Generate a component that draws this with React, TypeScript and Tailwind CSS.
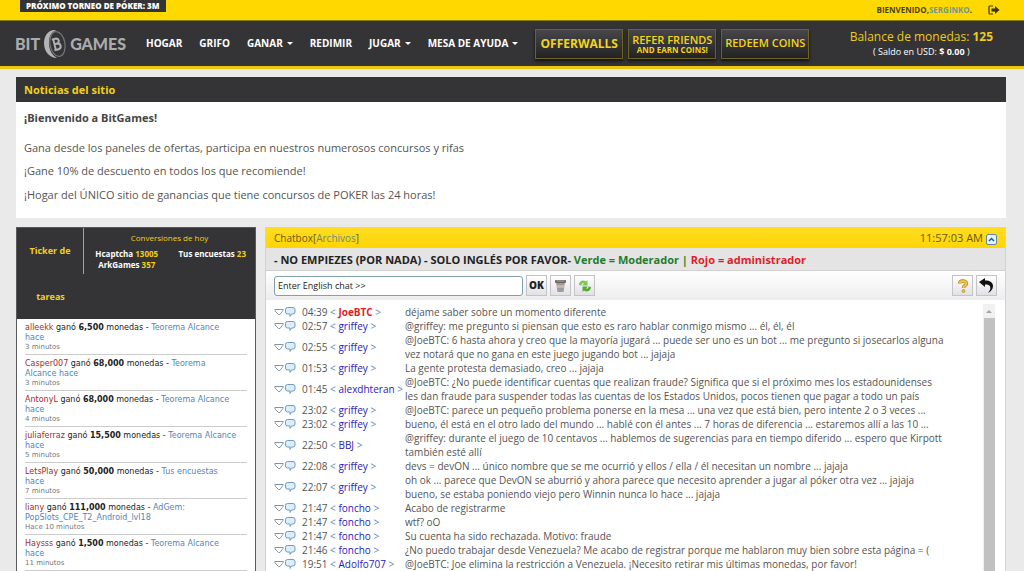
import React, { useState } from 'react';

const navItems = [
  { label: 'HOGAR', menu: false },
  { label: 'GRIFO', menu: false },
  { label: 'GANAR', menu: true },
  { label: 'REDIMIR', menu: false },
  { label: 'JUGAR', menu: true },
  { label: 'MESA DE AYUDA', menu: true },
];

const conversions = [
  { name: 'Hcaptcha', total: '13005' },
  { name: 'Tus encuestas', total: '23' },
  { name: 'ArkGames', total: '357' },
];

const tasks = [
  { user: 'alleekk', coins: '6,500', offer: ['Teorema Alcance', 'hace'], ago: '3 minutos' },
  { user: 'Casper007', coins: '68,000', offer: ['Teorema', 'Alcance hace'], ago: '3 minutos' },
  { user: 'AntonyL', coins: '68,000', offer: ['Teorema Alcance', 'hace'], ago: '4 minutos' },
  { user: 'juliaferraz', coins: '15,500', offer: ['Teorema Alcance', 'hace'], ago: '5 minutos' },
  { user: 'LetsPlay', coins: '50,000', offer: ['Tus encuestas', 'hace'], ago: '7 minutos' },
  { user: 'liany', coins: '111,000', offer: ['AdGem:', 'PopSlots_CPE_T2_Android_lvl18'], ago: 'Hace 10 minutos' },
  { user: 'Haysss', coins: '1,500', offer: ['Teorema Alcance', 'hace'], ago: '11 minutos' },
];

const messages = [
  { time: '04:39', user: 'JoeBTC', admin: true, text: 'déjame saber sobre un momento diferente' },
  { time: '02:57', user: 'griffey', text: '@griffey: me pregunto si piensan que esto es raro hablar conmigo mismo ... él, él, él' },
  { time: '02:55', user: 'griffey', text: '@JoeBTC: 6 hasta ahora y creo que la mayoría jugará ... puede ser uno es un bot ... me pregunto si josecarlos alguna\nvez notará que no gana en este juego jugando bot ... jajaja' },
  { time: '01:53', user: 'griffey', text: 'La gente protesta demasiado, creo ... jajaja' },
  { time: '01:45', user: 'alexdhteran', text: '@JoeBTC: ¿No puede identificar cuentas que realizan fraude? Significa que si el próximo mes los estadounidenses\nles dan fraude para suspender todas las cuentas de los Estados Unidos, pocos tienen que pagar a todo un país' },
  { time: '23:02', user: 'griffey', text: '@JoeBTC: parece un pequeño problema ponerse en la mesa ... una vez que está bien, pero intente 2 o 3 veces ...' },
  { time: '23:02', user: 'griffey', text: 'bueno, él está en el otro lado del mundo ... hablé con él antes ... 7 horas de diferencia ... estaremos allí a las 10 ...' },
  { time: '22:50', user: 'BBJ', text: '@griffey: durante el juego de 10 centavos ... hablemos de sugerencias para en tiempo diferido ... espero que Kirpott\ntambién esté allí' },
  { time: '22:08', user: 'griffey', text: 'devs = devON ... único nombre que se me ocurrió y ellos / ella / él necesitan un nombre ... jajaja' },
  { time: '22:07', user: 'griffey', text: 'oh ok ... parece que DevON se aburrió y ahora parece que necesito aprender a jugar al póker otra vez ... jajaja\nbueno, se estaba poniendo viejo pero Winnin nunca lo hace ... jajaja' },
  { time: '21:47', user: 'foncho', text: 'Acabo de registrarme' },
  { time: '21:47', user: 'foncho', text: 'wtf? oO' },
  { time: '21:47', user: 'foncho', text: 'Su cuenta ha sido rechazada. Motivo: fraude' },
  { time: '21:46', user: 'foncho', text: '¿No puedo trabajar desde Venezuela? Me acabo de registrar porque me hablaron muy bien sobre esta página = (' },
  { time: '19:51', user: 'Adolfo707', text: '@JoeBTC: Joe elimina la restricción a Venezuela. ¡Necesito retirar mis últimas monedas, por favor!' },
];

const Logo = () => (
  <a href="#" aria-label="BitGames" className="flex w-28 shrink-0 items-center gap-[3px] text-[16px] leading-6 font-black text-[#ababad] font-['Lato']">
    <span>BIT</span>
    <svg width="24" height="30" viewBox="0 0 24 30" className="shrink-0" aria-hidden="true">
      <path d="M13 1C6 0 1 6 1 14s5 15 13 15C9 26 6 21 6 14S8 4 13 1z" fill="#b4b4b6" />
      <ellipse cx="14.500" cy="15" rx="7.500" ry="12.500" transform="rotate(-10 14.500 15)" fill="#343436" stroke="#77777a" strokeWidth="1.200" />
      <g transform="rotate(-14 14 15)" fill="none" stroke="#b0b0b2" strokeWidth="2">
        <path d="M11.500 9.500v11M10 9.500h3.500c4 0 4 5.200 0 5.200h-2M13.500 14.700c4.800 0 4.800 5.800 0 5.800H10" />
      </g>
    </svg>
    <span>GAMES</span>
  </a>
);

const promoClass =
  'flex h-[30px] w-[88px] shrink-0 flex-col items-center justify-center whitespace-nowrap border border-[#6e6421] bg-linear-to-b from-[#47474b] to-[#232324] text-[#f3d41c] shadow-[0_2px_3px_#111] font-[\'Open_Sans\']';

const toolClass =
  'flex size-[21px] shrink-0 items-center justify-center border border-[#c3c3c9] bg-linear-to-b from-white to-[#e2e2e6]';

const RowIcons = () => (
  <svg width="22" height="12" viewBox="0 0 22 12" fill="none" className="shrink-0" aria-hidden="true">
    <path d="M.8 3.500h8.400q0 1-1 2L6 8.500H4.500L2 6Q.8 5 .8 3.500z" fill="#fff" stroke="#8295a5" />
    <path d="M13.500 1.500h5.500q2 0 2 2v2.500q0 2-2 2h-1.500l-1.500 2.500V8h-2.500q-2 0-2-2V3.500q0-2 2-2z" fill="#dceefb" stroke="#6f9cc4" />
  </svg>
);

const App = () => {
  const [chat, setChat] = useState('Enter English chat >>');

  return (
    <div className="h-screen overflow-hidden bg-[#eaeaea] text-[#555] font-['Open_Sans',sans-serif]">
      {/* Top bar */}
      <div className="flex h-[21px] items-start justify-between border-b border-[#8d7c1c] bg-[#ffd800] pr-6 pl-5">
        <div className="h-3 bg-[#343436] px-[6px] text-[8px] leading-3 font-extrabold text-white">PRÓXIMO TORNEO DE PÓKER: 3M</div>
        <div className="flex h-5 items-center text-[8px] font-bold text-[#4c430e]">
          <span>
            BIENVENIDO,<a href="#" className="text-[#6e9a8b]">SERGINKO</a>.
          </span>
          <button aria-label="Salir" className="ml-4">
            <svg width="12" height="10" viewBox="0 0 12 10" aria-hidden="true">
              <path d="M5 1H2Q1 1 1 2v6q0 1 1 1h3" fill="none" stroke="#3b3510" strokeWidth="1.200" />
              <path d="M3.500 3.500H7V1l4.500 4L7 9V6.500H3.500z" fill="#3b3510" />
            </svg>
          </button>
        </div>
      </div>

      {/* Header */}
      <header className="flex h-12 items-center border-b-[3px] border-[#eec60e] bg-[#343436] pr-[31px] pl-[15px]">
        <Logo />
        <nav className="ml-[19px] flex items-center gap-[17px] text-[10px] font-bold whitespace-nowrap text-white">
          {navItems.map((item) => (
            <a key={item.label} href="#" className="flex items-center gap-1">
              {item.label}
              {item.menu && (
                <svg width="6" height="3" viewBox="0 0 6 3" aria-hidden="true">
                  <path d="M0 0h6L3 3z" fill="#fff" />
                </svg>
              )}
            </a>
          ))}
        </nav>
        <div className="ml-[17px] flex gap-[5px]">
          <button className={`${promoClass} text-[12px] font-bold`}>OFFERWALLS</button>
          <button className={`${promoClass} text-[11px] leading-[11px] font-semibold`}>
            REFER FRIENDS
            <span className="text-[8px] leading-[9px] font-bold">AND EARN COINS!</span>
          </button>
          <button className={`${promoClass} text-[11px] font-semibold`}>REDEEM COINS</button>
        </div>
        <div className="ml-auto text-center whitespace-nowrap">
          <div className="text-[12px] leading-4 text-[#eccb1c]">
            Balance de monedas: <b>125</b>
          </div>
          <div className="text-[9px] leading-[14px] text-white">
            ( Saldo en USD: <b>$ 0.00</b> )
          </div>
        </div>
      </header>

      <main className="pt-2 pr-[18px] pl-4">
        {/* Site news */}
        <section className="bg-white text-[11px]">
          <h2 className="bg-[#343436] px-2 leading-[25px] font-bold text-[#f3d015]">Noticias del sitio</h2>
          <div className="px-2 pt-2 pb-[9px]">
            <p className="mb-1 leading-4 font-bold text-[#444]">¡Bienvenido a BitGames!</p>
            <p className="pt-[3px] leading-[29px]">Gana desde los paneles de ofertas, participa en nuestros numerosos concursos y rifas</p>
            <p className="leading-[18px]">¡Gane 10% de descuento en todos los que recomiende!</p>
            <p className="leading-[29px]">¡Hogar del ÚNICO sitio de ganancias que tiene concursos de POKER las 24 horas!</p>
          </div>
        </section>

        <div className="mt-[9px] flex gap-[9px]">
          {/* Task ticker */}
          <aside className="w-60 shrink-0 border border-[#5a5a5c] bg-white">
            <div className="flex h-[91px] bg-[#343436] text-[9px] text-[#f3d015]">
              <h2 className="w-[67px] shrink-0 text-center leading-[46px] font-bold">
                <span className="block border-r border-[#c9a90d]">Ticker de</span>
                <span className="block">tareas</span>
              </h2>
              <div className="grow pt-1 text-[8px]">
                <div className="text-center leading-3">Conversiones de hoy</div>
                <div className="mt-1 grid grid-cols-2 text-center leading-[11px] font-bold whitespace-nowrap">
                  {conversions.map((c) => (
                    <div key={c.name}>
                      <span className="text-white">{c.name}</span> {c.total}
                    </div>
                  ))}
                </div>
              </div>
            </div>
            <ul className="px-2 font-['DejaVu_Sans',sans-serif]">
              {tasks.map((t) => (
                <li key={t.user} className="border-b border-[#ccc] pt-1 pb-[2px] text-[8px] leading-[10px] text-[#222]">
                  <a href="#" className="text-[#a52a2a]">{t.user}</a> ganó <b>{t.coins}</b> monedas -{' '}
                  <a href="#" className="text-[#4f86b8]">
                    {t.offer[0]}
                    <br />
                    {t.offer[1]}
                  </a>
                  <div className="text-[7px] leading-[9px] text-[#777]">{t.ago}</div>
                </li>
              ))}
            </ul>
          </aside>

          {/* Chatbox */}
          <section className="min-w-0 grow border border-[#d2d2d2] bg-white text-[11px]">
            <div className="flex h-5 items-center justify-between bg-linear-to-b from-[#ffdc20] to-[#ffd500] px-2 text-[10px] text-[#66590f]">
              <h2>
                Chatbox[<a href="#" className="text-[#6c8a72]">Archivos</a>]
              </h2>
              <div className="flex items-center gap-[3px] text-[11px]">
                11:57:03 AM
                <button aria-label="Contraer" className="pt-[2px]">
                  <svg width="11" height="11" viewBox="0 0 11 11" aria-hidden="true">
                    <rect x=".5" y=".5" width="10" height="10" rx="1.500" fill="#e4f0fa" stroke="#5d88ad" />
                    <path d="M3 7l2.500-2.500L8 7" fill="none" stroke="#245a8b" strokeWidth="1.500" />
                  </svg>
                </button>
              </div>
            </div>
            <div className="h-[23px] border-b border-[#d0d0d0] bg-[#e4e4e4] px-2 text-[11px] leading-[23px] font-bold text-[#222]">
              - NO EMPIEZES (POR NADA) - SOLO INGLÉS POR FAVOR- <span className="text-[#1f7d2c]">Verde = Moderador |</span>{' '}
              <span className="text-[#dc1e28]">Rojo = administrador</span>
            </div>
            <div className="flex h-[29px] items-center gap-[3px] bg-linear-to-b from-white to-[#ededed] px-2">
              <input
                type="text"
                aria-label="Chat"
                value={chat}
                onChange={(e) => setChat(e.target.value)}
                className="h-5 w-[249px] rounded-[3px] border border-[#7fa0ac] bg-white px-[3px] text-[9px] text-[#222] outline-none"
              />
              <button className={`${toolClass} text-[10px] font-extrabold text-[#222]`}>OK</button>
              <button aria-label="Borrar" className={toolClass}>
                <svg width="13" height="14" viewBox="0 0 13 14" aria-hidden="true">
                  <path d="M2 3l1.500 10h6L11 3z" fill="#a39b97" />
                  <path d="M3 7.500h7" stroke="#c4bcb8" strokeWidth="2.500" />
                  <rect x="1" y="1" width="11" height="3" rx="1" fill="#6e625e" />
                  <path d="M2.500 2h8" stroke="#b3a9a5" />
                </svg>
              </button>
              <button aria-label="Actualizar" className={toolClass}>
                <svg width="14" height="14" viewBox="0 0 14 14" aria-hidden="true">
                  <path d="M1 6C1 2 5 .5 8 2.500L9.500 1v5.500H4L6 4.500C4.500 4 3.500 4.800 3.500 6.500z" fill="#7cc95a" />
                  <path d="M13 8c0 4-4 5.500-7 3.500L4.500 13V7.500H10L8 9.500c1.500.5 2.500-.3 2.500-2z" fill="#4fae30" />
                </svg>
              </button>
              <button aria-label="Ayuda" className={`${toolClass} ml-auto`}>
                <svg width="12" height="14" viewBox="0 0 12 14" fill="none" aria-hidden="true">
                  <path d="M2.500 4.500C2.500 1.500 9.500 1 9.500 4.500 9.500 6.500 6.500 6.500 6.500 9" stroke="#b07c14" strokeWidth="3.400" />
                  <path d="M2.500 4.500C2.500 1.500 9.500 1 9.500 4.500 9.500 6.500 6.500 6.500 6.500 9" stroke="#f3c24a" strokeWidth="2.200" />
                  <circle cx="6.500" cy="12" r="1.500" fill="#f3c24a" stroke="#b07c14" strokeWidth=".6" />
                </svg>
              </button>
              <button aria-label="Volver" className={toolClass}>
                <svg width="17" height="17" viewBox="0 0 17 17" aria-hidden="true">
                  <path d="M1 5l6-4v2.500c5 0 8 2 8 5.500 0 3-2 5.500-5 7 2-2.500 3-4.500 2-6.500C11.500 8 10 7.500 7 7.500V10z" fill="#111" />
                </svg>
              </button>
            </div>
            <div className="flex gap-4 pt-1 pr-[10px] pl-2">
              <table className="mt-px w-full self-start border-collapse leading-[14px]">
                <tbody>
                  {messages.map((m, i) => (
                    <tr key={i}>
                      <td className="w-[131px] p-0 align-middle text-[10px] whitespace-nowrap text-[#555]">
                        <div className="flex items-center">
                          <RowIcons />
                          <span className="ml-[6px]">
                            {m.time} <span className="text-[#5b86c0]">&lt;</span>{' '}
                            {m.admin ? (
                              <a href="#" className="font-bold text-[#dc1e28]">{m.user}</a>
                            ) : (
                              <a href="#" className="text-[#2a20b8]">{m.user}</a>
                            )}{' '}
                            <span className="text-[#5b86c0]">&gt;</span>
                          </span>
                        </div>
                      </td>
                      <td className="p-0 align-middle text-[10px] whitespace-pre-line">{m.text}</td>
                    </tr>
                  ))}
                </tbody>
              </table>
              {/* Scroll track */}
              <div className="flex w-3 shrink-0 flex-col items-center bg-[#f1f1f1]">
                <div className="flex h-[14px] items-center">
                  <svg width="6" height="3" viewBox="0 0 6 3" aria-hidden="true">
                    <path d="M0 3h6L3 0z" fill="#a3a3a3" />
                  </svg>
                </div>
                <div className="w-[11px] grow bg-[#c1c1c1]" />
              </div>
            </div>
          </section>
        </div>
      </main>
    </div>
  );
};

export default App;
